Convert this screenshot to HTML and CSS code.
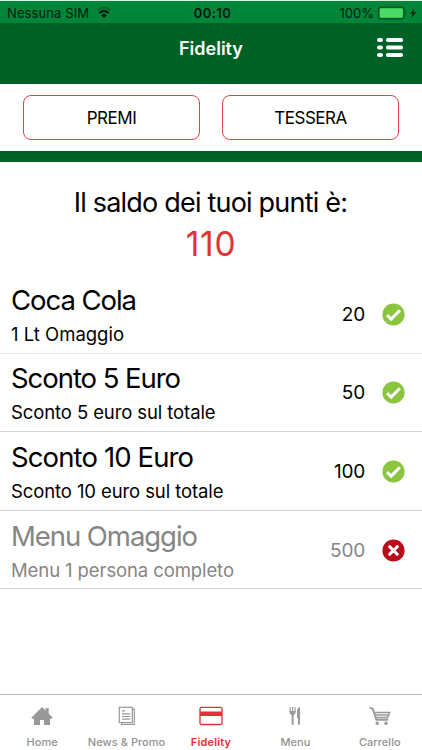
FILE: index.html
```html
<!DOCTYPE html>
<html lang="it">
<head>
<meta charset="utf-8">
<title>Fidelity</title>
<link rel="stylesheet" href="styles.css">
</head>
<body>
<div class="status">
  <div class="carrier"><span class="sim">Nessuna SIM</span>
    <svg class="wifi" width="16" height="13" viewBox="0 0 16 13"><path d="M1.2 4.4Q8-1 14.8 4.4" fill="none" stroke="#06401f" stroke-width="1.8" opacity=".55"/><path d="M3.2 7Q8 3.2 12.8 7" fill="none" stroke="#031c0c" stroke-width="2"/><path d="M5.2 9.2Q8 7 10.8 9.2L8 12z" fill="#031c0c"/></svg>
  </div>
  <span class="time">00:10</span>
  <div class="power"><span class="percent">100%</span>
    <svg width="39" height="14" viewBox="0 0 39 14"><rect x=".6" y="1.1" width="25.5" height="11.8" rx="2.6" fill="none" stroke="#044b21" stroke-width="1.1"/><rect x="1.8" y="2.3" width="23" height="9.4" rx="1.2" fill="#4cd964"/><path d="M27.4 5q1.6 2 0 4z" fill="#044b21"/><path d="M36.2 2.2L32.5 7.4h2.2L33.5 12l4.5-5.7h-2.5z" fill="#031c0c"/></svg>
  </div>
</div>
<header class="header">
  <h1 class="title">Fidelity</h1>
  <svg class="list-icon" width="26" height="19" viewBox="0 0 26 19" fill="#fff"><rect width="6" height="4" rx="2"/><rect x="9" width="17" height="4" rx="1.7"/><rect y="7.5" width="6" height="4" rx="2"/><rect x="9" y="7.5" width="17" height="4" rx="1.7"/><rect y="15" width="6" height="4" rx="2"/><rect x="9" y="15" width="17" height="4" rx="1.7"/></svg>
</header>
<nav class="actions"><button class="action">PREMI</button><button class="action">TESSERA</button></nav>
<main class="content">
  <section class="balance">
    <p class="balance-label">Il saldo dei tuoi punti è:</p>
    <p class="balance-value">110</p>
  </section>
  <ul class="rewards">
    <li class="reward soft"><div class="info"><h2>Coca Cola</h2><p class="short">1 Lt Omaggio</p></div><span class="points">20</span>
      <svg class="mark" viewBox="0 0 22 22"><circle cx="11" cy="11" r="10.6" fill="#8bc53f"/><path d="M4.8 11.6l4 3.8 8.3-8.5" fill="none" stroke="#fff" stroke-width="2.9"/></svg></li>
    <li class="reward"><div class="info"><h2>Sconto 5 Euro</h2><p>Sconto 5 euro sul totale</p></div><span class="points">50</span>
      <svg class="mark" viewBox="0 0 22 22"><circle cx="11" cy="11" r="10.6" fill="#8bc53f"/><path d="M4.8 11.6l4 3.8 8.3-8.5" fill="none" stroke="#fff" stroke-width="2.9"/></svg></li>
    <li class="reward"><div class="info"><h2 class="long">Sconto 10 Euro</h2><p>Sconto 10 euro sul totale</p></div><span class="points">100</span>
      <svg class="mark" viewBox="0 0 22 22"><circle cx="11" cy="11" r="10.6" fill="#8bc53f"/><path d="M4.8 11.6l4 3.8 8.3-8.5" fill="none" stroke="#fff" stroke-width="2.9"/></svg></li>
    <li class="reward locked"><div class="info"><h2>Menu Omaggio</h2><p>Menu 1 persona completo</p></div><span class="points">500</span>
      <svg class="mark" viewBox="0 0 22 22"><circle cx="11" cy="11" r="10.6" fill="#b90d1c"/><path d="M7.4 7.4l7.2 7.2M14.6 7.4l-7.2 7.2" fill="none" stroke="#fff" stroke-width="3" stroke-linecap="round"/></svg></li>
  </ul>
</main>
<nav class="tabs">
  <a class="tab"><svg width="24" height="20" viewBox="0 0 24 20"><path d="M1.3 11.7L12 1l3.7 3.6V2h3v5.5l4 4.2-1.2 1H20V19h-6v-5h-4v5H4v-6.3H2.4z" fill="#999"/></svg><span>Home</span></a>
  <a class="tab"><svg width="24" height="20" viewBox="0 0 24 20" fill="none" stroke="#999" stroke-width="1.2"><path d="M17.3 3.2h2V18.4H6.6v-2"/><rect x="4.3" y="1.3" width="13" height="15.2"/><path d="M7 4.8h3M7 7.8h8M7 10.5h8M7 13.2h8"/></svg><span>News &amp; Promo</span></a>
  <a class="tab active"><svg width="24" height="20" viewBox="0 0 24 20"><rect x="1" y="1.3" width="22" height="17.2" rx="1.4" fill="none" stroke="#e13236" stroke-width="1.3"/><path d="M1 5.5h22v4.5H1z" fill="#e13236"/></svg><span>Fidelity</span></a>
  <a class="tab"><svg width="24" height="20" viewBox="0 0 24 20"><path d="M7.1 1v5.3M9.6 1v5.3M12.1 1v5.3" stroke="#999" stroke-width="1.1"/><path d="M6.5 5h6.2q0 3.2-2.1 4v9.2q-1 1.4-2 0V9Q6.5 8.2 6.5 5z" fill="#999"/><path d="M17 1v17.2q-1 1.4-2 0v-6h-1V5.5Q14.3 1.3 17 1z" fill="#999"/></svg><span>Menu</span></a>
  <a class="tab"><svg width="24" height="20" viewBox="0 0 24 20" fill="none" stroke="#999"><path d="M1.5 1.7l3.2 1 3.8 11h11.8" stroke-width="1.9"/><path d="M6.2 6.5h15.5l-2 5.1H8.1M7 9h13" stroke-width="1.5"/><circle cx="9.2" cy="17.3" r="1.7" fill="#999" stroke="none"/><circle cx="18" cy="17.3" r="1.7" fill="#999" stroke="none"/></svg><span>Carrello</span></a>
</nav>
</body>
</html>
```
FILE: styles.css
```css
* { box-sizing: border-box; }
body { margin: 0; width: 422px; height: 750px; overflow: hidden; display: flex; flex-direction: column; background: #fff; color: #000; font-family: Inter, "Liberation Sans", sans-serif; }
h1, h2, p, ul { margin: 0; padding: 0; font-weight: 400; }
span { white-space: nowrap; }
svg { display: block; flex: none; }
.status { height: 23px; flex: none; display: grid; grid-template-columns: 1fr auto 1fr; align-items: center; padding: 1px 5px 0 7px; background: #008539; border-top: 1px solid #d5f3e3; color: #031c0c; font-size: 13px; line-height: 20px; }
.carrier, .power { display: flex; align-items: center; }
.carrier { gap: 7px; letter-spacing: .1px; }
.power { justify-content: flex-end; gap: 4px; }
.time { font-weight: 600; letter-spacing: .4px; padding-left: 1px; }
.header { height: 61px; flex: none; background: #006127; display: grid; grid-template-columns: 1fr auto 1fr; align-items: start; padding: 15px 19px 0; }
.title { grid-column: 2; color: #fff; font-size: 18px; line-height: 22px; font-weight: 600; }
.list-icon { justify-self: end; }
.actions { height: 67px; flex: none; display: grid; grid-template-columns: 177px 177px; gap: 22px; padding: 11px 23px; }
.action { border: 1px solid #df4545; border-radius: 8px; background: #fff; color: #000; font: 400 17px/22px Inter, sans-serif; letter-spacing: -.5px; padding: 1px 0 0; }
.content { flex: 1; border-top: 11px solid #006127; }
.balance { height: 113px; padding-top: 24px; text-align: center; }
.balance-label { font-size: 27px; line-height: 34px; letter-spacing: -.8px; padding-right: 1px; }
.balance-value { font-size: 33.5px; line-height: 48px; color: #dd3434; letter-spacing: .7px; }
.rewards { list-style: none; }
.reward { height: 78.6px; display: flex; align-items: center; padding: 0 17px 0 11px; border-bottom: 1px solid #d4d4d4; }
.reward.soft { border-color: #ececec; }
.reward.locked { color: #858585; }
.info { flex: 1; padding-top: 2px; }
.info h2 { font-size: 27.5px; line-height: 38px; letter-spacing: -1.05px; }
.info h2.long { letter-spacing: -.88px; }
.info p { font-size: 18.5px; line-height: 30px; letter-spacing: -.1px; }
.info p.short { letter-spacing: 0; }
.points { font-size: 19px; margin-right: 17px; letter-spacing: -.2px; padding-top: 1px; }
.mark { width: 23px; height: 23px; margin-top: 1px; }
.tabs { height: 56px; flex: none; display: grid; grid-template-columns: repeat(5, 1fr); border-top: 1px solid #bdbdbd; }
.tab { display: flex; flex-direction: column; align-items: center; padding-top: 11px; color: #929292; font-size: 11px; font-weight: 500; line-height: 14px; gap: 9px; letter-spacing: .05px; }
.tab.active { color: #e13236; font-weight: 600; letter-spacing: .15px; }
```
